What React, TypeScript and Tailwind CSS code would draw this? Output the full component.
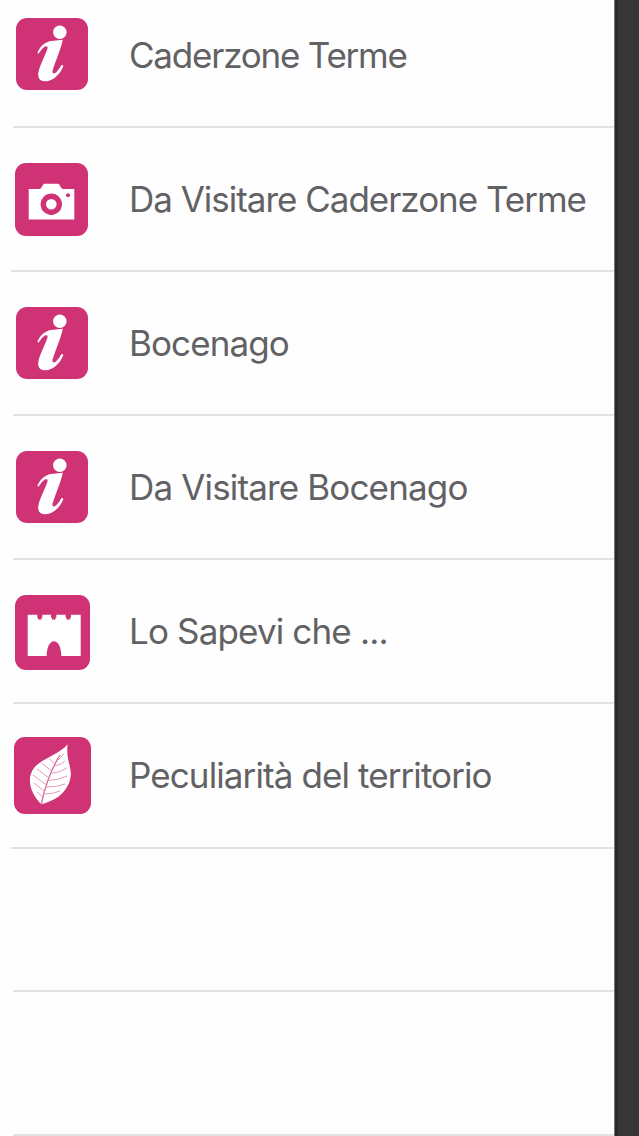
import { ReactNode } from "react";

const InfoIcon = () => (
  <svg viewBox="0 0 72 72" className="h-full w-full" fill="#fff">
    <circle cx="43.8" cy="14.3" r="6.7" />
    <path d="M21.5 34.5C25 26.5 31 23 37.5 22.8C41 22.7 44 21.8 46.8 21.8C45 31 39.5 43 36.6 52.5C35.8 56 38.5 56.5 41 53.5C43 51.2 44.2 49 45.6 47C46.4 46.6 47.5 47.2 47.2 48.4C43.5 57 37 62.8 29.5 63.2C23.5 63.5 21.2 59.5 22.6 53.5C24.5 45.5 29.5 37 31.5 30.5C32.2 27.5 29.5 27.6 27 30C25.3 31.7 24 33.8 22.8 35.2C22 35.6 21.3 35.3 21.5 34.5Z" />
  </svg>
);

const CameraIcon = () => (
  <svg viewBox="0 0 73 73" className="h-full w-full" fill="#fff">
    <path d="M13.7 26H24.5C27 26 27 20.7 30 20.7H42.5C45.5 20.7 45.5 26 48 26H59.3V56.5H13.7Z" />
    <circle cx="36.3" cy="41.3" r="8" stroke="#cf3376" strokeWidth="5.4" />
    <circle cx="53" cy="32.3" r="2" fill="#cf3376" />
  </svg>
);

const CastleIcon = () => (
  <svg viewBox="0 0 75 75" className="h-full w-full" fill="#fff">
    <path d="M12.7 19.7H22.2V22.5H23V24.4H26.6V22.5H27.4V19.7H36V22.5H36.8V24.4H40.6V22.5H41.4V19.7H50.6V22.5H51.4V24.4H55.2V22.5H56V19.7H65.7V61H46.3C46.3 53 43.5 46.3 39 46.3C34.5 46.3 31.7 53 31.7 61H12.7Z" />
  </svg>
);

const LeafIcon = () => (
  <svg viewBox="0 0 77 77" className="h-full w-full" fill="none">
    <path
      d="M53.5 7.3C53 13 53.2 18 54.5 24C56 30 57.2 34 56.7 39C55.8 48 50.5 55 44 60C39 63.5 33 65.5 27.3 67.3C24 64 19 58 17 51C15 43.5 15.5 37 20 31C25 25 33 21.5 40 17.5C46 14 50.5 11.5 53.5 7.3Z"
      fill="#fff"
    />
    <path d="M27.3 67C31 50 36.5 33 46 18" stroke="#d76a9c" strokeWidth="1.3" />
    <path
      d="M31 55L20 46M32.5 48L19 38M35 41L23 32M38 34L28 26.500M41 27L35 21.500M29 60L23 55M31 57Q39 57 46 54M33 50Q43 50 51 47M35 43.500Q45 43 53 39M38 36Q46 36 53 31M41 29Q47 28 51 24M44 23L50 17"
      stroke="#e59abd"
      strokeWidth="1"
    />
  </svg>
);

type Row = {
  label: string;
  icon: ReactNode;
  row: string;
  tile: string;
  text: string;
};

const rows: Row[] = [
  {
    label: "Caderzone Terme",
    icon: <InfoIcon />,
    row: "h-[128px] pt-[18px] pl-[3px] ml-[13px]",
    tile: "mr-[41px] size-[72px]",
    text: "mt-[13px] tracking-[-1.22px]",
  },
  {
    label: "Da Visitare Caderzone Terme",
    icon: <CameraIcon />,
    row: "h-36 pt-[35px] pl-1 ml-[11px]",
    tile: "mr-[41px] size-[73px]",
    text: "mt-[12px] tracking-[-1.02px]",
  },
  {
    label: "Bocenago",
    icon: <InfoIcon />,
    row: "h-36 pt-[35px] pl-[3px] ml-[13px]",
    tile: "mr-[41px] size-[72px]",
    text: "mt-[12px] tracking-[-0.9px]",
  },
  {
    label: "Da Visitare Bocenago",
    icon: <InfoIcon />,
    row: "h-36 pt-[35px] pl-[3px] ml-[13px]",
    tile: "mr-[41px] size-[72px]",
    text: "mt-[12px] tracking-[-0.85px]",
  },
  {
    label: "Lo Sapevi che ...",
    icon: <CastleIcon />,
    row: "h-36 pt-[35px] pl-[2px] ml-[13px]",
    tile: "mr-[39px] size-[75px]",
    text: "mt-[12px] tracking-[-0.85px]",
  },
  {
    label: "Peculiarità del territorio",
    icon: <LeafIcon />,
    row: "h-[145px] pt-[33px] pl-[3px] ml-[11px]",
    tile: "mr-[38px] size-[77px]",
    text: "mt-[14px] tracking-[-0.9px]",
  },
];

export default function App() {
  return (
    <div className="flex h-[1136px] w-[639px] overflow-hidden bg-[#373538] font-['Inter',sans-serif]">
      <main className="w-[614px] shrink-0 bg-[#fefefe]">
        {rows.map(({ label, icon, row, tile, text }) => (
          <div key={label} className={`flex items-start border-b-2 border-[#e2e1e3] ${row}`}>
            <div className={`shrink-0 overflow-hidden rounded-[11px] bg-[#cf3376] ${tile}`}>{icon}</div>
            <span className={`whitespace-nowrap text-[35px] leading-[48px] text-[#626164] ${text}`}>{label}</span>
          </div>
        ))}

        {/* empty rows */}
        <div className="ml-[13px] h-[143px] border-b-2 border-[#e2e1e3]" />
        <div className="ml-[13px] h-36 border-b-2 border-[#e2e1e3]" />
      </main>
      <div className="w-1 shrink-0 border-l border-[#777678] bg-[#29282a]" />
    </div>
  );
}
